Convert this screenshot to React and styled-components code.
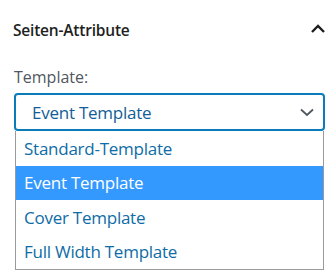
import React from "react";
import styled, { createGlobalStyle } from "styled-components";

const Global = createGlobalStyle`
  html, body { margin: 0; padding: 0; background: #fff; }
  body { font-family: "Open Sans", "Noto Sans", sans-serif; }
`;

const Panel = styled.div`
  width: 333px;
  height: 273px;
  box-sizing: border-box;
  padding: 16px 8px 0 14px;
  display: flex;
  flex-direction: column;
  overflow: hidden;
`;

const Header = styled.div`
  display: flex;
  align-items: center;
  justify-content: space-between;
  height: 28px;
`;

const Title = styled.h2`
  margin: 0;
  margin-left: -1px;
  font-size: 15.5px;
  font-weight: 600;
  color: #1e1e1e;
  letter-spacing: -0.2px;
`;

const IconWrap = styled.span`
  display: flex;
  width: 18px;
  height: 18px;
  align-items: center;
  justify-content: center;
  margin-top: -2px;
  margin-right: -2px;
`;

const Label = styled.div`
  margin-top: 23px;
  font-size: 16px;
  color: #50575e;
  line-height: 20px;
`;

const Field = styled.div`
  margin-top: 6px;
  display: flex;
  flex-direction: column;
  width: 311px;
`;

const SelectBox = styled.div`
  box-sizing: border-box;
  height: 38px;
  border: 2px solid #0a7cba;
  border-radius: 4px;
  display: flex;
  align-items: center;
  justify-content: space-between;
  padding: 0 8px 0 16px;
  font-size: 17px;
  color: #135e96;
  letter-spacing: -0.25px;
`;

const List = styled.ul`
  list-style: none;
  margin: 0 1px;
  padding: 0;
  border: 1px solid #9a9a9a;
  border-top: none;
`;

const Option = styled.li`
  height: 34.5px;
  display: flex;
  align-items: center;
  padding-left: 8px;
  font-size: 17px;
  letter-spacing: -0.25px;
  color: ${(p) => (p.$active ? "#ffffff" : "#0e6ca6")};
  background: ${(p) => (p.$active ? "#3399ff" : "#ffffff")};
`;

const options = ["Standard-Template", "Event Template", "Cover Template", "Full Width Template"];

export default function App() {
  return (
    <>
      <Global />
      <Panel>
        <Header>
          <Title>Seiten-Attribute</Title>
          <IconWrap>
            <svg width="18" height="18" viewBox="0 0 18 18">
              <path d="M3 12 L9 6 L15 12" fill="none" stroke="#1e1e1e" strokeWidth="2.4" />
            </svg>
          </IconWrap>
        </Header>
        <Label>Template:</Label>
        <Field>
          <SelectBox>
            <span>Event Template</span>
            <svg width="16" height="16" viewBox="0 0 16 16">
              <path d="M2 5.5 L8 11 L14 5.5" fill="none" stroke="#50575e" strokeWidth="1.8" />
            </svg>
          </SelectBox>
          <List>
            {options.map((o) => (
              <Option key={o} $active={o === "Event Template"}>{o}</Option>
            ))}
          </List>
        </Field>
      </Panel>
    </>
  );
}
